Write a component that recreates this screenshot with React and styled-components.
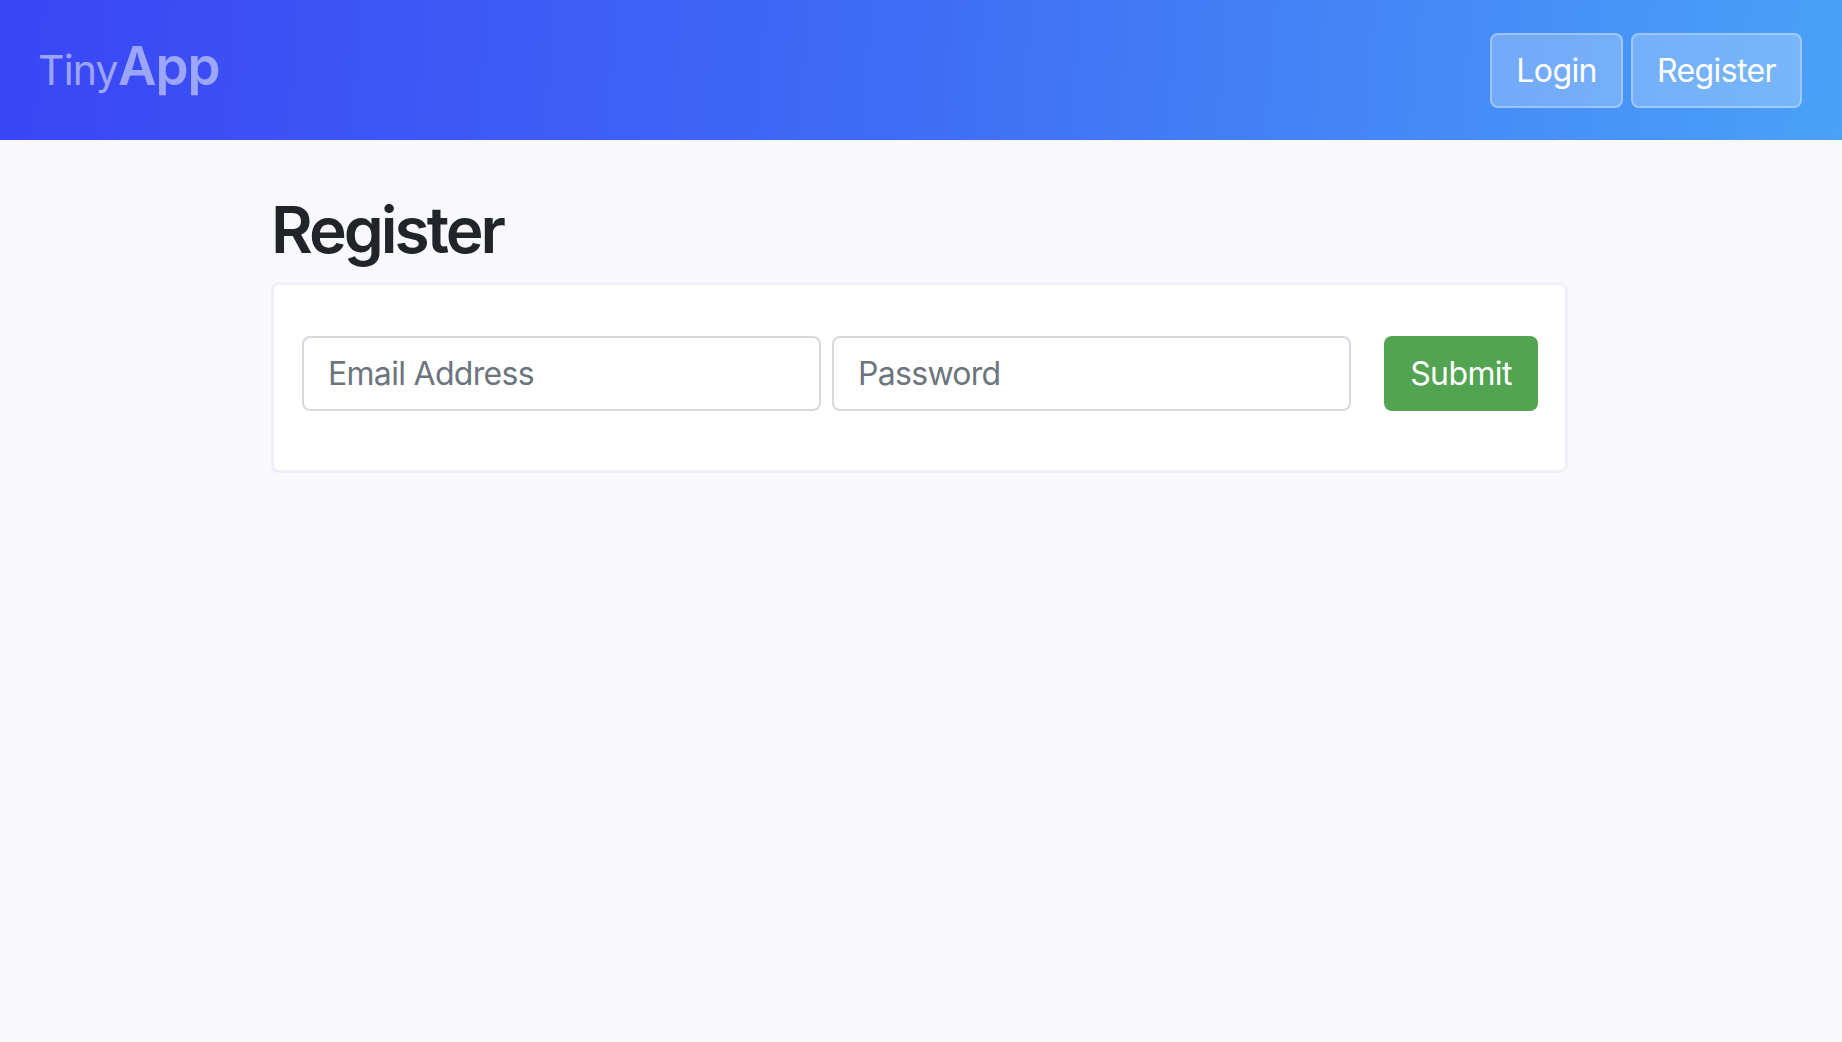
import React from "react";
import styled, { createGlobalStyle } from "styled-components";

const GlobalStyle = createGlobalStyle`
  * { box-sizing: border-box; }
  html, body { margin: 0; padding: 0; }
  body {
    background: #f8f8fd;
    font-family: Inter, "Open Sans", "Liberation Sans", sans-serif;
    color: #212529;
  }
`;

const Header = styled.header`
  height: 140px;
  display: flex;
  align-items: center;
  justify-content: space-between;
  padding: 0 40px 0 38px;
  background: linear-gradient(95deg, #3a45f5 0%, #3f6df5 50%, #4aa1f8 100%);
`;

const Logo = styled.a`
  display: flex;
  align-items: baseline;
  color: rgba(255, 255, 255, 0.5);
  text-decoration: none;
  margin-top: -8px;
`;

const LogoLight = styled.span`
  font-size: 41px;
  font-weight: 400;
  letter-spacing: -0.8px;
`;

const LogoBold = styled.span`
  font-size: 53px;
  font-weight: 600;
  letter-spacing: -1px;
`;

const Nav = styled.nav`
  display: flex;
  gap: 8px;
`;

const NavButton = styled.button`
  height: 75px;
  padding: 0 24px;
  font-family: inherit;
  font-size: 32px;
  font-weight: 400;
  letter-spacing: -0.6px;
  color: #fff;
  background: rgba(255, 255, 255, 0.25);
  border: 2px solid rgba(255, 255, 255, 0.3);
  border-radius: 8px;
  cursor: pointer;
`;

const Main = styled.main`
  width: 1297px;
  margin-left: calc(50% - 650px);
  padding-top: 52px;
`;

const Title = styled.h1`
  margin: 0 0 13px 0;
  font-size: 64px;
  font-weight: 600;
  line-height: 1.2;
  letter-spacing: -3px;
  color: #212529;
`;

const Card = styled.div`
  background: #fff;
  border: 3px solid #eeeff8;
  border-radius: 8px;
  padding: 51px 27px 59px 28px;
`;

const Form = styled.form`
  display: flex;
  align-items: center;
  gap: 11px;
`;

const Input = styled.input`
  flex: 1;
  min-width: 0;
  height: 75px;
  padding: 0 24px;
  font-family: inherit;
  font-size: 32px;
  letter-spacing: -0.7px;
  color: #212529;
  background: #fff;
  border: 2px solid #d5d9de;
  border-radius: 8px;
  outline: none;
  &::placeholder { color: #6c757d; }
`;

const SubmitButton = styled.button`
  width: 154px;
  height: 75px;
  margin-left: 22px;
  font-family: inherit;
  font-size: 32px;
  letter-spacing: -0.6px;
  color: #fff;
  background: #53a451;
  border: none;
  border-radius: 8px;
  cursor: pointer;
`;

export default function App() {
  return (
    <>
      <GlobalStyle />
      <Header>
        <Logo href="#">
          <LogoLight>Tiny</LogoLight>
          <LogoBold>App</LogoBold>
        </Logo>
        <Nav>
          <NavButton>Login</NavButton>
          <NavButton>Register</NavButton>
        </Nav>
      </Header>
      <Main>
        <Title>Register</Title>
        <Card>
          <Form onSubmit={(e) => e.preventDefault()}>
            <Input type="email" placeholder="Email Address" />
            <Input type="password" placeholder="Password" />
            <SubmitButton type="submit">Submit</SubmitButton>
          </Form>
        </Card>
      </Main>
    </>
  );
}
